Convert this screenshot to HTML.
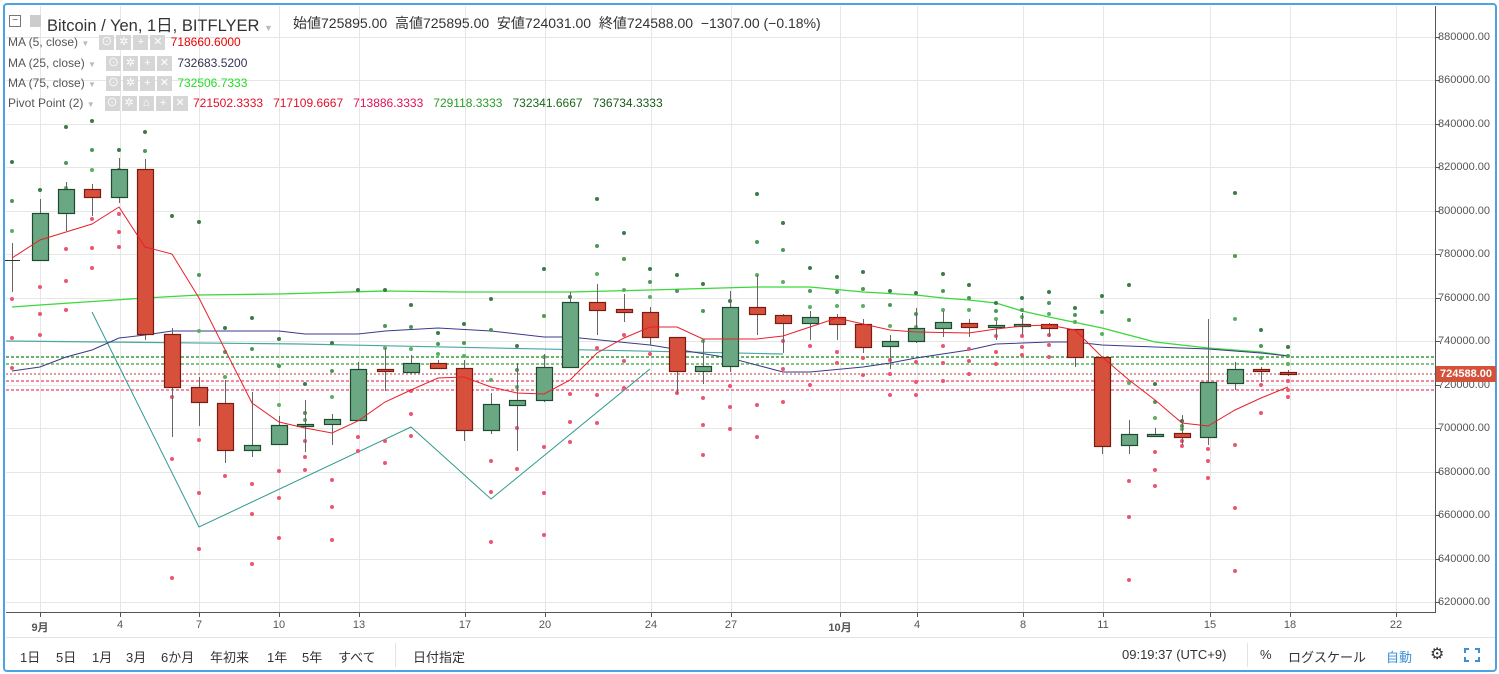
<!DOCTYPE html>
<html><head><meta charset="utf-8">
<style>
*{margin:0;padding:0;box-sizing:border-box}
body{width:1499px;height:674px;background:#fff;overflow:hidden;position:relative;font-family:"Liberation Sans","Noto Sans CJK JP",sans-serif}
#frame{position:absolute;left:3px;top:3px;width:1494px;height:669px;border:2px solid #4ba3e3;border-radius:4px}
.t{position:absolute;white-space:nowrap;color:#333}
.leg{position:absolute;left:8px;font-size:12px;color:#555;white-space:nowrap;height:15px;line-height:15px}
.ib{display:inline-block;width:15px;height:15px;background:#d6d6d6;margin-right:2px;vertical-align:top;color:#fff;font-size:11px;text-align:center;line-height:15px}
.ax{position:absolute;left:1438px;font-size:11px;color:#555}
.tl{position:absolute;top:619px;font-size:11px;color:#555;transform:translateX(-50%)}
.tb{position:absolute;top:647px;font-size:13px;color:#333}
</style></head><body>
<svg id="c" width="1499" height="674" style="position:absolute;left:0;top:0"></svg>
<div id="frame"></div>
<div class="t" style="left:9px;top:15px;width:12px;height:12px;border:1px solid #777;font-size:10px;line-height:9px;text-align:center;color:#555">−</div>
<div class="t" style="left:30px;top:15px;width:11px;height:12px;background:#ccc"></div>
<div class="t" style="left:47px;top:12px;font-size:16.5px;color:#333">Bitcoin / Yen, 1日, BITFLYER <span style="color:#bbb;font-size:9px">▼</span></div>
<div class="t" style="left:293px;top:13px;font-size:14px;color:#333">始値725895.00&nbsp; 高値725895.00&nbsp; 安値724031.00&nbsp; 終値724588.00&nbsp; −1307.00 (−0.18%)</div>
<div class="leg" style="top:35px">MA (5, close) <span style="color:#bbb;font-size:8px">▼</span>&nbsp;&nbsp; <span class="ib">⊙</span><span class="ib">✲</span><span class="ib">+</span><span class="ib">✕</span>&nbsp;<span style="color:#e00">718660.6000</span></div>
<div class="leg" style="top:56px">MA (25, close) <span style="color:#bbb;font-size:8px">▼</span>&nbsp;&nbsp; <span class="ib">⊙</span><span class="ib">✲</span><span class="ib">+</span><span class="ib">✕</span>&nbsp;<span style="color:#335">732683.5200</span></div>
<div class="leg" style="top:76px">MA (75, close) <span style="color:#bbb;font-size:8px">▼</span>&nbsp;&nbsp; <span class="ib">⊙</span><span class="ib">✲</span><span class="ib">+</span><span class="ib">✕</span>&nbsp;<span style="color:#2d2">732506.7333</span></div>
<div class="leg" style="top:96px">Pivot Point (2) <span style="color:#bbb;font-size:8px">▼</span>&nbsp;&nbsp; <span class="ib">⊙</span><span class="ib">✲</span><span class="ib">⌂</span><span class="ib">+</span><span class="ib">✕</span>&nbsp;<span style="color:#e0102a">721502.3333</span>&nbsp;&nbsp; <span style="color:#e0102a">717109.6667</span>&nbsp;&nbsp; <span style="color:#e0105a">713886.3333</span>&nbsp;&nbsp; <span style="color:#2a9a2a">729118.3333</span>&nbsp;&nbsp; <span style="color:#1a6a1a">732341.6667</span>&nbsp;&nbsp; <span style="color:#1a5a1a">736734.3333</span></div>
<div id="axis"></div>
<div class="t" style="left:1436px;top:366px;width:60px;height:16px;background:#d4513a;color:#fff;font-size:11px;font-weight:bold;line-height:16px;text-align:center">724588.00</div>
<div class="tl" style="left:40px;font-weight:bold">9月</div><div class="tl" style="left:120px">4</div><div class="tl" style="left:199px">7</div><div class="tl" style="left:279px">10</div><div class="tl" style="left:359px">13</div><div class="tl" style="left:465px">17</div><div class="tl" style="left:545px">20</div><div class="tl" style="left:651px">24</div><div class="tl" style="left:731px">27</div><div class="tl" style="left:840px;font-weight:bold">10月</div><div class="tl" style="left:917px">4</div><div class="tl" style="left:1023px">8</div><div class="tl" style="left:1103px">11</div><div class="tl" style="left:1210px">15</div><div class="tl" style="left:1290px">18</div><div class="tl" style="left:1396px">22</div>
<div class="tb" style="left:20px">1日</div><div class="tb" style="left:56px">5日</div><div class="tb" style="left:92px">1月</div><div class="tb" style="left:126px">3月</div><div class="tb" style="left:161px">6か月</div><div class="tb" style="left:210px">年初来</div><div class="tb" style="left:267px">1年</div><div class="tb" style="left:302px">5年</div><div class="tb" style="left:338px">すべて</div>
<div class="t" style="left:395px;top:643px;width:1px;height:24px;background:#e3e3e3"></div>
<div class="tb" style="left:413px">日付指定</div>
<div class="tb" style="left:1122px">09:19:37 (UTC+9)</div>
<div class="t" style="left:1247px;top:643px;width:1px;height:24px;background:#e3e3e3"></div>
<div class="tb" style="left:1260px">%</div><div class="tb" style="left:1288px">ログスケール</div><div class="tb" style="left:1386px;color:#3a8fd8">自動</div>
<div class="tb" style="left:1430px;font-size:16px;top:644px">⚙</div>
<svg class="t" style="left:1464px;top:648px" width="16" height="14"><path d="M1 5V1H5M11 1H15V5M15 9V13H11M5 13H1V9" fill="none" stroke="#3a8fd8" stroke-width="2"/></svg>
<script>
var s=document.getElementById('c'),h='';
function L(x1,y1,x2,y2,c,w,d){h+='<line x1="'+x1+'" y1="'+y1+'" x2="'+x2+'" y2="'+y2+'" stroke="'+c+'" stroke-width="'+(w||1)+'"'+(d?' stroke-dasharray="'+d+'"':'')+'/>';}
function P(pts,c,w){h+='<polyline fill="none" stroke="'+c+'" stroke-width="'+(w||1)+'" points="'+pts+'"/>';}
var ax='';
for(var k=0;k<14;k++){var y=Math.round(37+k*43.46)+.5;L(6,y,1435,y,'#e6e6e6');ax+='<div class="ax" style="top:'+(y-7)+'px">'+(880000-k*20000)+'.00</div>';L(1435,y,1440,y,'#555');}
document.getElementById('axis').innerHTML=ax;
[40,120,199,279,359,465,545,651,731,840,917,1023,1103,1210,1290,1396].forEach(function(x){L(x+.5,6,x+.5,612,'#e6e6e6');L(x+.5,612,x+.5,617,'#555');});
L(1435.5,6,1435.5,612.5,'#555');L(6,612.5,1436,612.5,'#555');L(6,637.5,1495,637.5,'#e3e3e3');
L(6,357,1435,357,'#3a9a3a',1.5,'3,2');L(6,364,1435,364,'#5ab05a',1.5,'3,2');
L(6,374,1435,374,'#c0392b',1,'2,2');L(6,381,1435,381,'#f06080',1.5,'3,2');L(6,390,1435,390,'#f06080',1.5,'3,2');
P('6,341 300,344 783,354','#4aa8a0',1.2);
P('92,312 199,527 411,427 491,499 650,369','#2f9a8f',1);
P('12,307 40,305 145,298 199,295 279,294 385,291 464,292 570,292 650,290 757,287 810,287 863,292 916,295 943,298 969,300 996,303 1022,311 1049,317 1102,328 1155,342 1208,348 1261,352 1288,356','#3ad83a',1.3);
P('12,371 40,367 66,357 92,350 119,338 145,335 172,331 279,331 305,334 358,334 385,331 438,328 491,331 544,337 570,337 650,345 730,358 783,372 810,372 863,367 890,363 916,358 969,350 996,344 1049,342 1075,342 1102,345 1155,347 1208,349 1261,353 1288,356','#3a3a8a',1);
var D=[[12,[162,201,231],[299,338,368]],[40,[190],[287,314,335]],[66,[127,163,188],[249,281,310]],[92,[121,150,170],[219,248,268]],[119,[150,170],[214,232,247]],[145,[132,151],[]],[172,[216],[397,459,578]],[199,[222,275,331],[440,493,549]],[225,[328,352,377],[476]],[252,[318,349],[484,514,564]],[279,[339,366,405],[471,498,538]],[305,[384,413,420],[441,457,470]],[332,[343,371,397],[480,507,540]],[358,[290],[437,451]],[385,[290,326,348],[441,463]],[411,[305,327,349],[391,414,436]],[438,[333,344,354],[]],[464,[324,343,356],[]],[491,[299,330,380],[461,492,542]],[517,[346,370,387],[428,469]],[544,[269,316,357],[447,493,535]],[570,[297],[394,422,442]],[597,[199,246,274],[348,395,423]],[624,[233,259,290],[335,361,388]],[650,[269,282,297],[354]],[677,[275,291],[393]],[703,[284,311,341],[398,425,455]],[730,[301],[386,407,429]],[757,[194,242,275],[405,437]],[783,[223,250,282],[341,369,402]],[810,[268,291,307],[346,385]],[837,[277,292,306],[352,363]],[863,[272,289,306],[358,375]],[890,[291,305,326],[360,374,395]],[916,[293,314,327],[362,382,395]],[943,[274,291,310],[346,363,381]],[969,[285,298,310],[349,361,374]],[996,[303,311,319],[336,352,364]],[1022,[298,310,317],[336,347,355]],[1049,[292,303,314],[335,345,357]],[1075,[308,315,322],[]],[1102,[296,312,334],[]],[1129,[285,320,383],[481,517,580]],[1155,[384,402,418],[452,470,486]],[1182,[421,426,429],[441,446]],[1208,[],[449,461,478]],[1235,[193,256,319],[445,508,571]],[1261,[330,346,358],[385,413]],[1288,[347,356,364],[381,390,397]]];
D.forEach(function(d){var gc=['#3d7a4a','#4a9a55','#5ab060'];d[1].forEach(function(y,i){h+='<circle cx="'+d[0]+'" cy="'+y+'" r="2" fill="'+gc[Math.min(i,2)]+'"/>';});d[2].forEach(function(y){h+='<circle cx="'+d[0]+'" cy="'+y+'" r="2" fill="#ec5572"/>';});});
var C=[[12,260,261,243,292,2],[40,213,260,199,260,1],[66,189,213,182,231,1],[92,189,197,184,216,0],[119,169,197,158,203,1],[145,169,334,159,340,0],[172,334,387,328,437,0],[199,387,402,377,426,0],[225,403,450,380,463,0],[252,445,450,392,457,1],[279,425,444,416,444,1],[305,424,425,400,452,1],[332,419,424,414,445,1],[358,369,420,362,420,1],[385,369,371,348,391,0],[411,363,372,355,374,1],[438,363,368,360,368,0],[464,368,430,360,441,0],[491,404,430,393,434,1],[517,400,405,363,451,1],[544,367,400,354,402,1],[570,302,367,292,367,1],[597,302,310,284,335,0],[624,309,312,294,322,0],[650,312,337,307,345,0],[677,337,371,337,393,0],[703,366,371,340,384,1],[730,307,366,291,372,1],[757,307,314,275,335,0],[783,315,323,314,353,0],[810,317,323,311,340,1],[837,317,324,314,340,0],[863,324,347,319,353,0],[890,341,346,335,369,1],[916,328,341,308,343,1],[943,322,328,311,337,1],[969,323,327,319,337,0],[996,325,327,320,340,1],[1022,324,326,313,335,1],[1049,324,328,323,337,0],[1075,329,357,329,367,0],[1102,357,446,357,454,0],[1129,434,445,420,454,1],[1155,434,435,428,435,1],[1182,433,437,415,445,0],[1208,382,437,319,445,1],[1235,369,383,362,390,1],[1261,369,371,367,382,0],[1288,372,374,370,376,0]];
var ma5='12,258 40,240 92,224 119,207 145,247 172,254 199,298 252,403 279,422 305,428 332,433 358,421 385,402 411,390 438,378 464,377 491,387 517,393 544,394 570,380 597,353 624,338 650,327 677,327 703,339 757,339 783,336 810,327 837,318 863,324 890,330 916,332 969,333 996,329 1022,326 1049,325 1075,330 1102,357 1129,380 1155,400 1182,423 1208,426 1235,410 1261,398 1288,387';
C.forEach(function(c){var x=c[0];var st=c[5]==0?'#7a1a10':(c[5]==1?'#1e4a2e':'#555');L(x+.5,c[3],x+.5,c[4],'#666');
if(c[5]==2){L(x-7,c[1]+.5,x+8,c[1]+.5,'#333');return;}
var hh=Math.max(c[2]-c[1],2);h+='<rect x="'+(x-7.5)+'" y="'+(c[1]+.5)+'" width="16" height="'+hh+'" fill="'+(c[5]?'#6aa883':'#d6503c')+'" stroke="'+st+'" stroke-width="1.2"/>';});
P(ma5,'#e8202a',1);
s.innerHTML=h;
</script>
</body></html>
